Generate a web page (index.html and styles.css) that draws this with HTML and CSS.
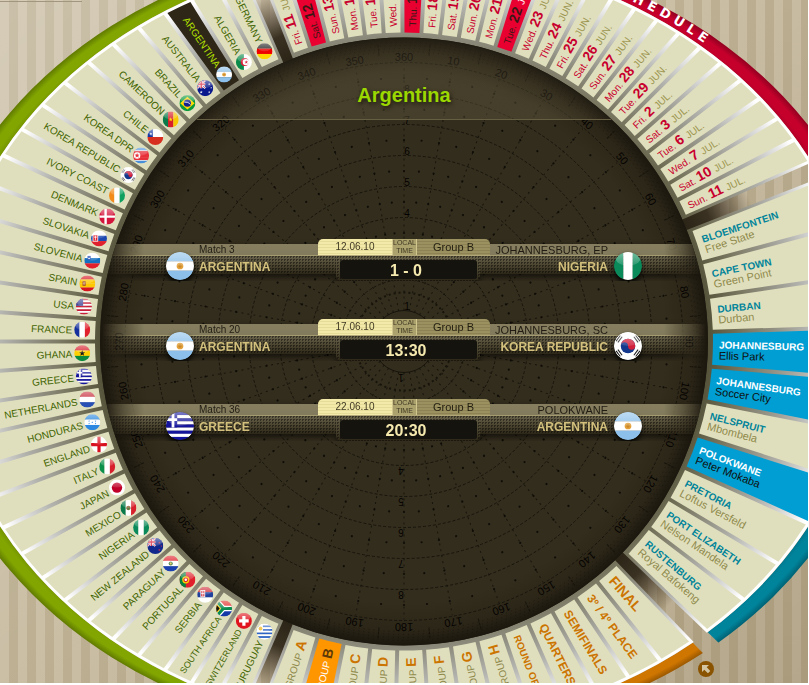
FILE: index.html
```html
<!DOCTYPE html>
<html lang="en">
<head>
<meta charset="utf-8">
<meta name="viewport" content="width=device-width, initial-scale=1">
<title>Argentina - match calendar</title>
<link rel="stylesheet" href="styles.css">
</head>
<body>
<main class="stage">
  <svg class="wheel" id="wheel" viewBox="-482 -397.5 964 795" role="group" aria-label="Calendar wheel">
    <defs id="defs">
      <radialGradient id="ringFill" gradientUnits="userSpaceOnUse" cx="0" cy="0" r="460" gradientTransform="scale(1 .8425)">
        <stop offset=".66" stop-color="#55523a"/>
        <stop offset=".74" stop-color="#79765f"/>
        <stop offset=".8" stop-color="#8f8e80"/>
        <stop offset=".88" stop-color="#b6b6b2"/>
        <stop offset=".96" stop-color="#ececec"/>
        <stop offset=".985" stop-color="#fff"/>
      </radialGradient>
      <radialGradient id="bandShade" gradientUnits="userSpaceOnUse" cx="0" cy="0" r="482" gradientTransform="scale(1 .8237)">
        <stop offset=".955" stop-color="#000" stop-opacity=".14"/>
        <stop offset=".97" stop-color="#000" stop-opacity="0"/>
        <stop offset=".985" stop-color="#000" stop-opacity="0"/>
        <stop offset="1" stop-color="#000" stop-opacity=".26"/>
      </radialGradient>
      <radialGradient id="gapFill" gradientUnits="userSpaceOnUse" cx="0" cy="0" r="374">
        <stop offset=".81" stop-color="#2b2517"/>
        <stop offset=".88" stop-color="#3a3122"/>
        <stop offset="1" stop-color="#3a2c1c" stop-opacity="0"/>
      </radialGradient>
      <radialGradient id="discFill" gradientUnits="userSpaceOnUse" cx="0" cy="0" r="304">
        <stop offset=".86" stop-color="#332d1d"/>
        <stop offset=".95" stop-color="#2c2618"/>
        <stop offset="1" stop-color="#1b170e"/>
      </radialGradient>
      <linearGradient id="gloss" x1="0" y1="0" x2="0" y2="1">
        <stop offset="0" stop-color="#fff" stop-opacity=".5"/>
        <stop offset="1" stop-color="#fff" stop-opacity=".12"/>
      </linearGradient>
      <clipPath id="round"><circle cx="10" cy="10" r="10"/></clipPath>
      <path id="bandText" d="M0-390A466 390 0 0 1 304-295.600"/>
    </defs>
    <circle r="374" fill="url(#gapFill)"/>
    <g id="sections"></g>
    <text class="band-title"><textPath href="#bandText" startOffset="100%" text-anchor="end">SCHEDULE</textPath></text>
    <circle r="304" fill="url(#discFill)"/>
    <g id="dial"></g>
  </svg>

  <section class="disc">
    <header class="disc-head"><h1>Argentina</h1></header>
    <ol class="matches">
      <li class="match">
        <div class="side">
          <svg class="flag" aria-hidden="true"><use href="#flag-ar"/></svg>
          <div class="lines"><span class="info">Match 3</span><strong class="team">ARGENTINA</strong></div>
        </div>
        <div class="middle">
          <div class="tabs"><time class="date">12.06.10</time><span class="local">LOCAL TIME</span><span class="group">Group B</span></div>
          <div class="frame"><span class="score">1 - 0</span></div>
        </div>
        <div class="side away">
          <svg class="flag" aria-hidden="true"><use href="#flag-ng"/></svg>
          <div class="lines"><span class="info">JOHANNESBURG, EP</span><strong class="team">NIGERIA</strong></div>
        </div>
      </li>
      <li class="match">
        <div class="side">
          <svg class="flag" aria-hidden="true"><use href="#flag-ar"/></svg>
          <div class="lines"><span class="info">Match 20</span><strong class="team">ARGENTINA</strong></div>
        </div>
        <div class="middle">
          <div class="tabs"><time class="date">17.06.10</time><span class="local">LOCAL TIME</span><span class="group">Group B</span></div>
          <div class="frame"><span class="score">13:30</span></div>
        </div>
        <div class="side away">
          <svg class="flag" aria-hidden="true"><use href="#flag-kr"/></svg>
          <div class="lines"><span class="info">JOHANNESBURG, SC</span><strong class="team">KOREA REPUBLIC</strong></div>
        </div>
      </li>
      <li class="match">
        <div class="side">
          <svg class="flag" aria-hidden="true"><use href="#flag-gr"/></svg>
          <div class="lines"><span class="info">Match 36</span><strong class="team">GREECE</strong></div>
        </div>
        <div class="middle">
          <div class="tabs"><time class="date">22.06.10</time><span class="local">LOCAL TIME</span><span class="group">Group B</span></div>
          <div class="frame"><span class="score">20:30</span></div>
        </div>
        <div class="side away">
          <svg class="flag" aria-hidden="true"><use href="#flag-ar"/></svg>
          <div class="lines"><span class="info">POLOKWANE</span><strong class="team">ARGENTINA</strong></div>
        </div>
      </li>
    </ol>
  </section>

  <button class="corner" type="button" aria-label="Collapse">
    <svg viewBox="0 0 16 16" aria-hidden="true"><path d="M4 4h7L8.700 6.300l3.600 3.600-2.400 2.400-3.600-3.600L4 11z" fill="#d3c4a2"/></svg>
  </button>
</main>
<script src="wheel.js"></script>
</body>
</html>
```
FILE: styles.css
```css
* {
  box-sizing: border-box;
}

body {
  margin: 0;
  padding: 0 1px 2px 0;
  height: 100vh;
  background: #fff;
  font-family: "Liberation Sans", Arial, sans-serif;
}

.stage {
  position: relative;
  display: grid;
  grid-template: minmax(0, 1fr) / minmax(0, 1fr);
  place-items: center;
  height: 100%;
  overflow: hidden;
  background:
    linear-gradient(#a2967f, #a2967f) 0 1px / 82px 1px no-repeat,
    linear-gradient(135deg, rgba(255, 255, 255, .2), rgba(255, 255, 255, 0) 45%, rgba(90, 70, 30, .2)),
    repeating-linear-gradient(90deg, #cbbfa6 0 9px, #bdb093 9px 18px);
}

.wheel {
  grid-area: 1 / 1;
  width: 964px;
  height: 795px;
}

.wheel text {
  font-size: 10px;
}

/* wheel cards */
.card path {
  fill: #e0dfbd;
}

.card .light,
.card .place {
  fill: #8f8a4c;
}

.countries .card text {
  fill: #3f6400;
}

.countries .card .small {
  font-size: 9px;
}

.countries .active path {
  fill: #2e2718;
}

.countries .active text {
  fill: #b4e000;
}

.dates .card text {
  fill: #c8002e;
}

.dates .card .num {
  font-size: 14px;
  font-weight: bold;
}

.dates .card .light {
  fill: #9c9650;
}

.dates .active path {
  fill: #ea0030;
}

.dates .active text {
  fill: #3d1714;
}

.dates .active .light {
  fill: #fff;
}

.venues .name {
  fill: #00849a;
  font-weight: bold;
}

.venues .card .place {
  font-size: 11px;
}

.venues .active path {
  fill: #009ed3;
}

.venues .active .name {
  fill: #fff;
}

.venues .active .place {
  fill: #10100c;
}

.phases .card .key {
  fill: #cc7400;
  font-size: 14px;
  font-weight: bold;
}

.phases .card .long {
  font-size: 12px;
}

.phases .card .small {
  font-size: 10px;
}

.phases .active path {
  fill: #ff9600;
}

.phases .active .light {
  fill: #fff;
}

.phases .card.active .key {
  fill: #5e3a08;
}

.wheel .band-title {
  fill: #fff;
  font-family: "DejaVu Sans", sans-serif;
  font-size: 13px;
  font-weight: bold;
  letter-spacing: 5px;
}

/* polar grid behind the matches */
.dial circle,
.dial line {
  fill: none;
  stroke: #17140c;
}

.dial .dot {
  fill: #0f0d08;
  stroke: none;
}

.dial text {
  fill: #050301;
  text-anchor: middle;
}

.dial .degree {
  font-size: 11px;
}

/* disc content */
.disc {
  grid-area: 1 / 1;
  position: relative;
  width: 608px;
  height: 607px;
  border-radius: 50%;
  overflow: hidden;
}

.disc-head {
  display: grid;
  place-items: center;
  height: 82px;
  padding-top: 32px;
  border-bottom: 1px solid #655e42;
  background: radial-gradient(circle at 50% 304px, rgba(92, 84, 60, .45) 270px, rgba(60, 52, 36, .2) 304px);
}

.disc-head h1 {
  margin: 0;
  color: #9bd700;
  font-size: 20px;
  line-height: 28px;
  text-shadow: 1px 2px 4px #1c180e;
}

.matches {
  display: grid;
  gap: 38px;
  margin: 0;
  padding: 119px 0 0;
  list-style: none;
}

.match {
  position: relative;
  display: grid;
  grid-template-columns: 1fr 172px 1fr;
  height: 42px;
  filter: drop-shadow(0 3px 3px rgba(0, 0, 0, .6));
  -webkit-mask-image: linear-gradient(90deg, transparent 2px, #000 44px calc(100% - 44px), transparent calc(100% - 2px));
  mask-image: linear-gradient(90deg, transparent 2px, #000 44px calc(100% - 44px), transparent calc(100% - 2px));
}

.match::before {
  content: "";
  position: absolute;
  z-index: -1;
  inset: 17px 0 auto;
  height: 18px;
}

.match::before,
.frame {
  background:
    conic-gradient(rgba(10, 8, 4, .5) 25%, transparent 0) 0 0 / 3px 3px,
    linear-gradient(#67614a, #49432f 55%, #2c2618);
}

.side {
  display: flex;
  gap: 5px;
  padding: 5px 0 0 66px;
  background:
    linear-gradient(#867e5f, #827a5c) 0 5px / 100% 11px no-repeat,
    linear-gradient(#a39a70, #a39a70) 0 16px / 100% 1px no-repeat;
}

.away {
  flex-direction: row-reverse;
  gap: 6px;
  padding: 5px 66px 0 0;
  text-align: right;
}

.flag {
  width: 28px;
  height: 28px;
  margin-top: 8px;
  border-radius: 50%;
  box-shadow: 0 2px 4px rgba(0, 0, 0, .7);
}

.info,
.team {
  display: block;
  white-space: nowrap;
}

.info {
  height: 11px;
  color: #211d12;
  font-size: 10px;
  line-height: 12px;
}

.away .info {
  font-size: 11px;
}

.team {
  color: #d2c07c;
  font-size: 12px;
  line-height: 24px;
}

.middle {
  display: flex;
  flex-direction: column;
  align-items: center;
  background: linear-gradient(#b0a678, #b0a678) 0 16px / 100% 1px no-repeat;
}

.tabs {
  display: grid;
  grid-template-columns: 74px 25px 1fr;
  width: 100%;
  height: 16px;
  margin-bottom: 1px;
  border-radius: 5px 5px 0 0;
  overflow: hidden;
  color: #3f3922;
  font-size: 10px;
  line-height: 16px;
  text-align: center;
}

.date {
  background: repeating-linear-gradient(#f3e9a8 0 2px, #e6dc9a 2px 3px);
}

.local {
  border: solid #d0c68e;
  border-width: 0 1px;
  background: #aba16d;
  font-size: 7px;
  line-height: 8px;
}

.group {
  background: repeating-linear-gradient(#9b9160 0 2px, #8c8253 2px 3px);
  color: #221e10;
  font-size: 11px;
}

.frame {
  width: 144px;
  height: 25px;
  margin-left: 8px;
  padding: 4px 3px 0 4px;
  border-radius: 0 0 5px 5px;
}

.score {
  display: block;
  height: 19px;
  padding-right: 5px;
  border-radius: 3px;
  background: #14130e;
  color: #f5e9ae;
  font-size: 16px;
  font-weight: bold;
  line-height: 21px;
  text-align: center;
}

.corner {
  position: absolute;
  left: calc(50% + 294px);
  top: calc(50% + 319px);
  width: 16px;
  height: 16px;
  padding: 0;
  border: 0;
  border-radius: 50%;
  background: #8a5300;
}

.corner svg {
  display: block;
}
```
FILE: wheel.js
```js
const rad = (deg) => deg * Math.PI / 180;

/* ---------- flags, drawn in a 20 x 20 box ---------- */
const box = (c, x, y, w, h) => `<rect x="${x}" y="${y}" width="${w}" height="${h}" fill="${c}"/>`;
const rows = (...c) => c.map((v, i) => box(v, 0, i * 20 / c.length, 20, 20 / c.length + 0.1)).join('');
const cols = (...c) => c.map((v, i) => box(v, i * 20 / c.length, 0, 20 / c.length + 0.1, 20)).join('');
const disc = (c, x, y, r) => `<circle cx="${x}" cy="${y}" r="${r}" fill="${c}"/>`;
const poly = (c, p) => `<polygon points="${p}" fill="${c}"/>`;
const star = (c, x, y, r) => poly(c, Array.from({ length: 10 }, (_, i) => {
  const a = rad(i * 36 - 90), q = i % 2 ? r * 0.4 : r;
  return `${(x + q * Math.cos(a)).toFixed(2)},${(y + q * Math.sin(a)).toFixed(2)}`;
}).join(' '));
const jack = box('#1d2f8f', 0, 0, 10, 10)
  + '<path d="M0 0l10 10M10 0L0 10" stroke="#fff" stroke-width="2.400"/><path d="M0 0l10 10M10 0L0 10" stroke="#d8203a" stroke-width="1"/>'
  + '<path d="M5 0v10M0 5h10" stroke="#fff" stroke-width="3"/><path d="M5 0v10M0 5h10" stroke="#d8203a" stroke-width="1.600"/>';

const flags = {
  de: rows('#222', '#e00', '#ffd500'),
  dz: cols('#0a8a4a', '#fff') + disc('#d8203a', 11, 10, 5) + disc('#fff', 12.500, 10, 4) + star('#d8203a', 13, 10, 2.400),
  ar: rows('#8cc0ea', '#fff', '#8cc0ea') + disc('#e2a13c', 10, 10, 2.400) + disc('#c98728', 10, 10, 1.200),
  au: box('#0a1a8c', 0, 0, 20, 20) + jack + star('#fff', 5, 15, 2) + star('#fff', 15, 5, 1.500) + star('#fff', 15, 15, 1.500) + star('#fff', 17.500, 9.500, 1.200),
  br: box('#0a9a3c', 0, 0, 20, 20) + poly('#ffd900', '10,2 19,10 10,18 1,10') + disc('#14248c', 10, 10, 4.500) + '<path d="M6 8.500q5-.5 8 3" stroke="#fff" fill="none"/>',
  cm: cols('#0a7a4a', '#d81e28', '#f7c800') + star('#ffd900', 10, 10, 2.800),
  cl: rows('#fff', '#d83020') + box('#1438a0', 0, 0, 7, 10) + star('#fff', 4.500, 6, 1.800),
  kp: rows('#4a90d8', '#e8303a', '#e8303a', '#e8303a', '#4a90d8') + box('#fff', 0, 3.500, 20, 0.8) + box('#fff', 0, 15.700, 20, 0.8) + disc('#fff', 5, 10, 4) + star('#e8303a', 5, 10, 3.500),
  kr: box('#fff', 0, 0, 20, 20) + disc('#14388c', 10, 10, 5.200) + '<path d="M4.800 10a5.200 5.200 0 0 1 10.400 0 2.600 2.600 0 0 1-5.200 0 2.600 2.600 0 0 0-5.200 0z" fill="#d0203c"/>'
    + '<path d="M1.500 6.500l3-4M2.800 7.400l3-4M15.500 2.500l3 4M14.200 3.400l3 4M1.500 13.500l3 4M2.800 12.600l3 4M15.500 17.500l3-4M14.200 16.600l3-4" stroke="#222" stroke-width=".8"/>',
  ci: cols('#f28a1c', '#fff', '#0fa060'),
  dk: box('#d4163c', 0, 0, 20, 20) + '<path d="M8 0v20M0 10h20" stroke="#fff" stroke-width="3"/>',
  sk: rows('#fff', '#1c48b0', '#e0202c') + box('#fff', 2, 5, 7, 9) + box('#e0202c', 3, 6, 5, 7) + '<path d="M5.500 6.500v6M4 8.500h3" stroke="#fff"/>',
  si: rows('#fff', '#1470c0', '#e0202c') + box('#1c48b0', 4, 4, 4, 5) + '<path d="M4.500 8l1.500-2 1.500 2" fill="#fff"/>',
  es: rows('#d8141e', '#ffc800', '#ffc800', '#d8141e') + box('#a85a28', 4, 7, 4, 6) + disc('#d0a080', 6, 10, 1.500),
  us: rows('#c8203c', '#fff', '#c8203c', '#fff', '#c8203c', '#fff', '#c8203c', '#fff', '#c8203c') + box('#3c4494', 0, 0, 9, 9),
  fr: cols('#14309c', '#fff', '#e0202c'),
  gh: rows('#d8202c', '#ffd000', '#0a8a3c') + star('#111', 10, 10, 4),
  gr: rows('#14149c', '#fff', '#14149c', '#fff', '#14149c', '#fff', '#14149c', '#fff', '#14149c') + box('#14149c', 0, 0, 8, 11) + '<path d="M5 0v11M0 5.500h8" stroke="#fff" stroke-width="2"/>',
  nl: rows('#c83040', '#fff', '#2850b4'),
  hn: rows('#2c88e0', '#fff', '#2c88e0') + [[10, 10], [6, 8.500], [14, 8.500], [6, 11.500], [14, 11.500]].map(([x, y]) => star('#2c88e0', x, y, 1.200)).join(''),
  en: box('#fff', 0, 0, 20, 20) + '<path d="M10 0v20M0 10h20" stroke="#d8101e" stroke-width="4"/>',
  it: cols('#0a9048', '#fff', '#d8202c'),
  jp: box('#fff', 0, 0, 20, 20) + disc('#c00028', 10, 10, 6.500),
  mx: cols('#0a7a4a', '#fff', '#d8202c') + disc('#8a6a3c', 10, 10, 2.800) + disc('#4a8a4a', 10, 11, 1.200),
  ng: cols('#0a8a5a', '#fff', '#0a8a5a'),
  nz: box('#12288c', 0, 0, 20, 20) + jack + star('#e0304a', 15, 6, 1.500) + star('#e0304a', 15, 15, 1.500) + star('#e0304a', 17.500, 10, 1.200),
  py: rows('#e0202c', '#fff', '#1c40b0') + disc('#5a8a5a', 10, 10, 2.600) + disc('#f0d060', 10, 10, 1.200),
  pt: box('#e0202c', 0, 0, 20, 20) + box('#0a8040', 0, 0, 8, 20) + disc('#ffd000', 8, 10, 4.500) + disc('#e0202c', 8, 10, 3) + disc('#fff', 8, 10, 1.600),
  rs: rows('#d0303c', '#20409c', '#fff') + box('#fff', 4, 4, 6, 9) + box('#d0303c', 5, 5, 4, 7) + '<path d="M7 5v7M5 8.500h4" stroke="#fff"/>',
  za: rows('#e0302c', '#1438a8') + '<path d="M0 0l9 10-9 10M9 10h11" stroke="#fff" stroke-width="7" fill="none"/><path d="M0 0l9 10-9 10M9 10h11" stroke="#0a8a4c" stroke-width="4" fill="none"/>' + poly('#ffc800', '0,3.500 6,10 0,16.500') + poly('#111', '0,5 4.500,10 0,15'),
  ch: box('#e0141e', 0, 0, 20, 20) + '<path d="M10 4v12M4 10h12" stroke="#fff" stroke-width="4"/>',
  uy: rows('#fff', '#2c64c8', '#fff', '#2c64c8', '#fff', '#2c64c8', '#fff', '#2c64c8', '#fff') + box('#fff', 0, 0, 8, 10) + disc('#f0b828', 5, 6, 2.400),
};

document.getElementById('defs').insertAdjacentHTML('beforeend', Object.entries(flags).map(([id, art]) =>
  `<symbol id="flag-${id}" viewBox="0 0 20 20"><g clip-path="url(#round)">${art}<ellipse cx="10" cy="4" rx="9" ry="6" fill="url(#gloss)"/></g></symbol>`).join(''));

/* ---------- wheel geometry ---------- */
const INNER = 304, CARD = 309;
const RING = [460, 387], CARD_EDGE = [457, 384], BAND = [482, 397];

/* point where a ray, shifted sideways by `shift`, meets an ellipse */
function hit(deg, shift, [a, b]) {
  const c = Math.cos(rad(deg)), s = Math.sin(rad(deg));
  const ox = -s * shift, oy = c * shift;
  const A = c * c / (a * a) + s * s / (b * b);
  const B = 2 * (ox * c / (a * a) + oy * s / (b * b));
  const C = ox * ox / (a * a) + oy * oy / (b * b) - 1;
  const t = (-B + Math.sqrt(B * B - 4 * A * C)) / (2 * A);
  return `${(ox + t * c).toFixed(1)} ${(oy + t * s).toFixed(1)}`;
}
function wedge(from, to, inner, outer, shift) {
  return `M${hit(from, shift, inner)}L${hit(from, shift, outer)}`
    + `A${outer.join(' ')} 0 0 1 ${hit(to, -shift, outer)}L${hit(to, -shift, inner)}`
    + `A${inner.join(' ')} 0 0 0 ${hit(from, shift, inner)}z`;
}

/* a leading * marks a selected card; a last field names a text size class */
const countries = [
  'uy|URUGUAY', 'ch|SWITZERLAND|small', 'za|SOUTH AFRICA|small', 'rs|SERBIA', 'pt|PORTUGAL', 'py|PARAGUAY',
  'nz|NEW ZEALAND', 'ng|NIGERIA', 'mx|MEXICO', 'jp|JAPAN', 'it|ITALY', 'en|ENGLAND', 'hn|HONDURAS',
  'nl|NETHERLANDS', 'gr|GREECE', 'gh|GHANA', 'fr|FRANCE', 'us|USA', 'es|SPAIN', 'si|SLOVENIA', 'sk|SLOVAKIA',
  'dk|DENMARK', 'ci|IVORY COAST', 'kr|KOREA REPUBLIC', 'kp|KOREA DPR', 'cl|CHILE', 'cm|CAMEROON', 'br|BRAZIL',
  'au|AUSTRALIA', '*ar|ARGENTINA', 'dz|ALGERIA', 'de|GERMANY',
];
const dates = [
  'Fri.|11|JUN.', '*Sat.|12|JUN.', 'Sun.|13|JUN.', 'Mon.|14|JUN.', 'Tue.|15|JUN.', 'Wed.|16|JUN.', '*Thu.|17|JUN.',
  'Fri.|18|JUN.', 'Sat.|19|JUN.', 'Sun.|20|JUN.', 'Mon.|21|JUN.', '*Tue.|22|JUN.', 'Wed.|23|JUN.', 'Thu.|24|JUN.',
  'Fri.|25|JUN.', 'Sat.|26|JUN.', 'Sun.|27|JUN.', 'Mon.|28|JUN.', 'Tue.|29|JUN.', 'Fri.|2|JUL.', 'Sat.|3|JUL.',
  'Tue.|6|JUL.', 'Wed.|7|JUL.', 'Sat.|10|JUL.', 'Sun.|11|JUL.',
];
const venues = [
  'BLOEMFONTEIN|Free State', 'CAPE TOWN|Green Point', 'DURBAN|Durban', '*JOHANNESBURG|Ellis Park',
  '*JOHANNESBURG|Soccer City', 'NELSPRUIT|Mbombela', '*POLOKWANE|Peter Mokaba', 'PRETORIA|Loftus Versfeld',
  'PORT ELIZABETH|Nelson Mandela', 'RUSTENBURG|Royal Bafokeng',
];
const phases = [
  'FINAL', '3º / 4º PLACE||long', 'SEMIFINALS||long', 'QUARTERS||long', 'ROUND OF 16||small', 'GROUP|H', 'GROUP|G',
  'GROUP|F', 'GROUP|E', 'GROUP|D', 'GROUP|C', '*GROUP|B', 'GROUP|A',
];

const label = {
  countries(mid, [code, name, size = '']) {
    const x = 322 * Math.cos(rad(mid)) - 8, y = 322 * Math.sin(rad(mid)) - 8;
    return `<text class="${size}" transform="rotate(${mid - 180})" x="-332" y="4" text-anchor="end">${name}</text>`
      + `<use href="#flag-${code}" x="${x.toFixed(1)}" y="${y.toFixed(1)}" width="16" height="16"/>`;
  },
  dates(mid, [day, num, month]) {
    return `<text transform="rotate(${mid})" x="315" y="4">${day} <tspan class="num">${num} </tspan><tspan class="light">${month}</tspan></text>`;
  },
  venues(mid, [name, place]) {
    return `<g transform="rotate(${mid})"><text class="name" x="315" y="-1">${name}</text><text class="place" x="315" y="10">${place}</text></g>`;
  },
  phases(mid, [name, key, size = '']) {
    return key
      ? `<text transform="rotate(${mid - 180})" x="-316" y="5" text-anchor="end"><tspan class="light">${name} </tspan><tspan class="key">${key}</tspan></text>`
      : `<text class="key ${size}" transform="rotate(${mid})" x="315" y="5">${name}</text>`;
  },
};

function section(kind, items, start, end, color) {
  const step = (end - start) / items.length;
  const cards = items.map((raw, i) => {
    const active = raw[0] === '*';
    const parts = raw.replace('*', '').split('|');
    const from = start + i * step;
    return `<a href="#${kind}-${i}" class="card${active ? ' active' : ''}">`
      + `<path d="${wedge(from, from + step, [CARD, CARD], CARD_EDGE, 2)}"/>${label[kind](from + step / 2, parts)}</a>`;
  }).join('');
  const band = wedge(start, end, RING, BAND, 0);
  return `<g class="${kind}"><path d="${band}" fill="${color}"/><path d="${band}" fill="url(#bandShade)"/>`
    + `<path d="${wedge(start, end, [INNER, INNER], RING, -1)}" fill="url(#ringFill)"/>${cards}</g>`;
}

document.getElementById('sections').innerHTML =
  section('countries', countries, 113.6, 246.4, '#82a500')
  + section('dates', dates, -111.25, -23.85, '#c4002b')
  + section('venues', venues, -21.35, 43.75, '#00849c')
  + section('phases', phases, 46.2, 111.3, '#cf7600');

/* ---------- polar grid ---------- */
const dial = document.getElementById('dial');
dial.setAttribute('class', 'dial');
let art = '';
for (let r = 31; r <= 279; r += 31) {
  art += `<circle r="${r}" stroke-dasharray="${r === 31 ? 'none' : '3 2'}"/>`;
}
art += '<circle r="49" stroke-dasharray="2 3" stroke-width="2"/>';
for (const r of [290, 293, 296, 299]) {
  art += `<circle r="${r}" stroke-dasharray="1 4" opacity=".7"/>`;
}
for (let a = 0; a < 360; a += 5) {
  const ten = a % 10 === 0;
  if (ten) {
    art += `<line x1="0" x2="0" y1="-31" y2="-278" stroke-dasharray="2 4" transform="rotate(${a})"/>`
      + `<text class="degree" transform="rotate(${a})" y="-281">${a || 360}</text>`;
  } else {
    art += `<line x1="0" x2="0" y1="-287" y2="-298" stroke-dasharray="3 1" transform="rotate(${a})"/>`;
  }
  for (let r = 77.5; r < 278; r += 31) {
    if (ten || r > 100) art += `<circle class="dot" cy="${-r}" r="1.100" transform="rotate(${a})"/>`;
  }
}
for (const n of [1, 4, 5, 6, 7, 8]) {
  art += `<text x="3" y="${-n * 31 - 1}">${n}</text><text x="3" y="${-n * 31 - 1}" transform="rotate(180)">${n}</text>`;
}
dial.innerHTML = art;
```
